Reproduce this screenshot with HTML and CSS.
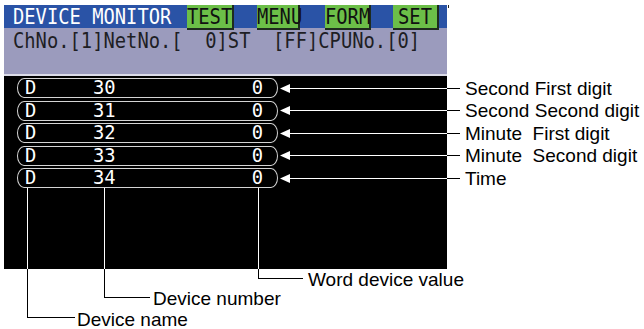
FILE: index.html
```html
<!DOCTYPE html>
<html lang="en">
<head>
    <meta charset="UTF-8">
    <title>Device Monitor</title>
    <link rel="stylesheet" href="styles.css">
</head>
<body>
    <div class="figure">
        <div class="screen">
            <div class="titlebar">
                <span class="lcd title">DEVICE MONITOR</span>
                <span class="key key-test"><span class="lcd">TEST</span></span>
                <span class="key key-menu"><span class="lcd">MENU</span></span>
                <span class="key key-form"><span class="lcd">FORM</span></span>
                <span class="key key-set"><span class="lcd">SET</span></span>
            </div>
            <div class="status">
                <span class="lcd">ChNo.[1]NetNo.[  0]ST  [FF]CPUNo.[0]</span>
            </div>
            <div class="devices">
                <div class="dev"><span class="lcd name">D</span><span class="lcd num">30</span><span class="lcd val">0</span></div>
                <div class="dev"><span class="lcd name">D</span><span class="lcd num">31</span><span class="lcd val">0</span></div>
                <div class="dev"><span class="lcd name">D</span><span class="lcd num">32</span><span class="lcd val">0</span></div>
                <div class="dev"><span class="lcd name">D</span><span class="lcd num">33</span><span class="lcd val">0</span></div>
                <div class="dev"><span class="lcd name">D</span><span class="lcd num">34</span><span class="lcd val">0</span></div>
            </div>
        </div>

        <ul class="notes">
            <li>Second First digit</li>
            <li>Second Second digit</li>
            <li>Minute&nbsp;&nbsp;First digit</li>
            <li>Minute&nbsp;&nbsp;Second digit</li>
            <li>Time</li>
        </ul>

        <!-- leader lines -->
        <svg class="leaders" width="644" height="329" viewBox="0 0 644 329">
            <g fill="#fff">
                <polygon points="280,88.5 290,84 290,93"/>
                <polygon points="280,110.5 290,106 290,115"/>
                <polygon points="280,133.5 290,129 290,138"/>
                <polygon points="280,155.5 290,151 290,160"/>
                <polygon points="280,178.5 290,174 290,183"/>
            </g>
            <g stroke="#fff" stroke-width="1" shape-rendering="crispEdges">
                <line x1="289" y1="88.5" x2="447" y2="88.5"/>
                <line x1="289" y1="110.5" x2="447" y2="110.5"/>
                <line x1="289" y1="133.5" x2="447" y2="133.5"/>
                <line x1="289" y1="155.5" x2="447" y2="155.5"/>
                <line x1="289" y1="178.5" x2="447" y2="178.5"/>
                <line x1="27.5" y1="188" x2="27.5" y2="269"/>
                <line x1="104.5" y1="188" x2="104.5" y2="269"/>
                <line x1="258.5" y1="188" x2="258.5" y2="269"/>
            </g>
            <g stroke="#000" stroke-width="1" fill="none" shape-rendering="crispEdges">
                <line x1="447" y1="88.5" x2="460" y2="88.5"/>
                <line x1="447" y1="110.5" x2="460" y2="110.5"/>
                <line x1="447" y1="133.5" x2="460" y2="133.5"/>
                <line x1="447" y1="155.5" x2="460" y2="155.5"/>
                <line x1="447" y1="178.5" x2="460" y2="178.5"/>
                <polyline points="27.5,269 27.5,317.5 75,317.5"/>
                <polyline points="104.5,269 104.5,297.5 150,297.5"/>
                <polyline points="258.5,269 258.5,278.5 303,278.5"/>
            </g>
        </svg>

        <span class="callout callout-value">Word device value</span>
        <span class="callout callout-number">Device number</span>
        <span class="callout callout-name">Device name</span>
    </div>
</body>
</html>
```

FILE: styles.css
```css
* {
    box-sizing: border-box;
}
body {
    margin: 0;
    background: #fff;
    font-family: 'Liberation Sans', Arial, sans-serif;
    color: #000;
}
.figure {
    position: relative;
    display: flex;
    align-items: flex-start;
    width: 644px;
    height: 329px;
}
.screen {
    margin: 5px 0 0 4px;
    width: 443px;
    flex-shrink: 0;
}
.lcd {
    display: inline-block;
    font-family: 'DejaVu Sans Mono', monospace;
    font-size: 18.8px;
    white-space: pre;
    transform: scaleY(1.15);
}
.titlebar {
    position: relative;
    display: flex;
    height: 23px;
    line-height: 23px;
    padding-left: 9px;
    background: #2a53a6;
    color: #fff;
}
.titlebar::after {
    content: "";
    position: absolute;
    right: -2px;
    top: 0;
    width: 1px;
    height: 3px;
    background: #222;
}
.title {
    width: 162px;
}
.key {
    height: 25px;
    margin-top: 0;
    background: #6cbf48;
    color: #111;
    text-align: center;
    border-right: 2px solid #1e2b1e;
    border-bottom: 2px solid #1e2b1e;
    position: relative;
    z-index: 1;
}
.key-test { margin-left: 12px; width: 47px; }
.key-menu { margin-left: 23px; width: 43px; }
.key-form { margin-left: 25px; width: 46px; }
.key-set  { margin-left: 22px; width: 46px; }
.status {
    height: 48px;
    padding-left: 9px;
    line-height: 25px;
    background: #9b9bbd;
    color: #1e1e24;
    border-bottom: 2px solid #dcdce8;
}
.devices {
    height: 193px;
    padding: 2px 0 0 13px;
    background: #000;
}
.dev {
    display: flex;
    width: 261px;
    height: 20px;
    margin-bottom: 2.5px;
    padding: 0 14px 0 7px;
    line-height: 18px;
    color: #fff;
    border: 1px solid #d4d4d4;
    border-radius: 7px / 10px;
}
.dev .lcd {
    transform: scaleY(1.05);
}
.name {
    width: 68px;
}
.val {
    margin-left: auto;
}
.notes {
    list-style: none;
    margin: 77.6px 0 0;
    padding-left: 18px;
    font-size: 19px;
    line-height: 22.5px;
    white-space: nowrap;
}
.leaders {
    position: absolute;
    left: 0;
    top: 0;
    pointer-events: none;
}
.callout {
    position: absolute;
    font-size: 19px;
    line-height: 22.5px;
    white-space: nowrap;
}
.callout-value { left: 308px; top: 269px; }
.callout-number { left: 153px; top: 288px; }
.callout-name { left: 77px; top: 309px; }
```
